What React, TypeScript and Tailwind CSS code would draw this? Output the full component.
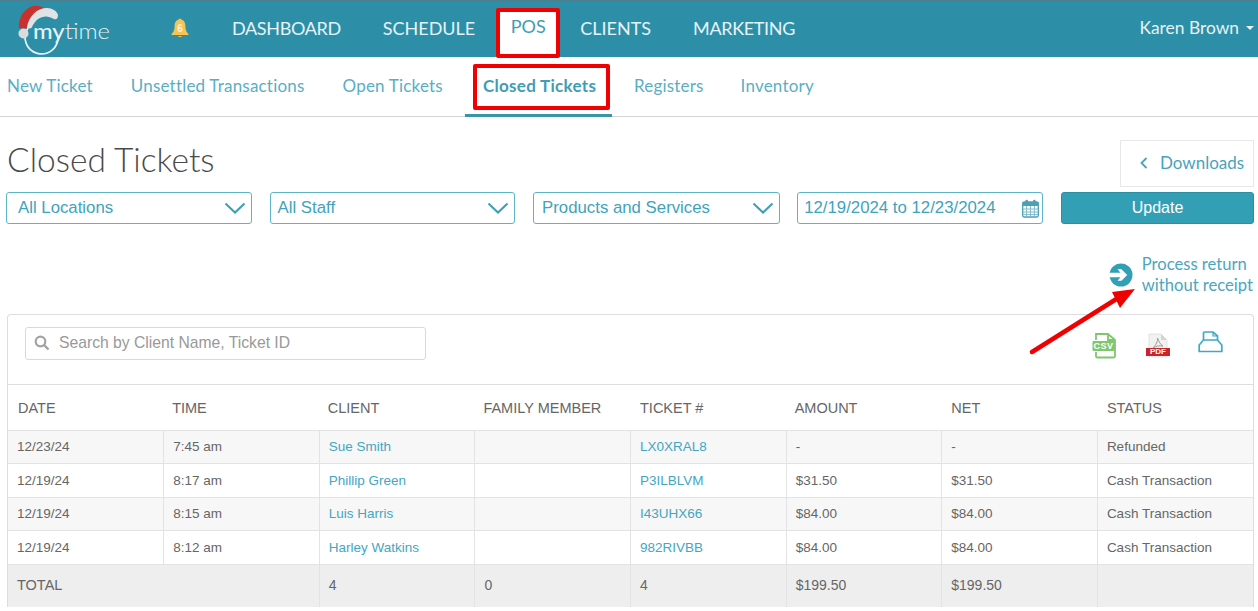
import React from "react";

const lato = "font-['Lato',sans-serif]";

function Logo() {
  return (
    <svg width="120" height="56" viewBox="0 0 120 56" className="block">
      <path d="M28 27 A 16.5 16.5 0 1 0 58 35" fill="none" stroke="#eaf4f7" strokeWidth="1.7" />
      <path d="M19 27 C18 18 23 8 33 5 C38 4 44 6 47 9 C39 10 32 14 29 20 L26 28 Z" fill="#c9312d" />
      <path d="M27 26 C29 15 37 7 47 7 C52 7 57 10 58 14 C58 18 56 19 54 18 C46 13 37 15 32 26 C31 28 27 28 27 26 Z" fill="#dfe3e6" />
      <circle cx="23.5" cy="32.5" r="5" fill="#d9dcde" />
      <text x="33" y="38" fontFamily="Lato, sans-serif" fontSize="21" fill="#e6f3f6" textLength="77" lengthAdjust="spacingAndGlyphs">
        <tspan fontWeight="500">my</tspan>
        <tspan fontWeight="300">time</tspan>
      </text>
    </svg>
  );
}

function Bell() {
  return (
    <div className="relative w-[18px] h-[20px]">
      <svg width="18" height="20" viewBox="0 0 18 20" className="block">
        <circle cx="9" cy="2" r="1.6" fill="#f2bd4d" />
        <path d="M9 1.5 C5 1.5 3.6 4.5 3.6 8 C3.6 12 2.6 14 0.6 16 L0.6 17 L17.4 17 L17.4 16 C15.4 14 14.4 12 14.4 8 C14.4 4.5 13 1.5 9 1.5 Z" fill="#f6c453" />
        <path d="M7 18 L11 18 C11 19.5 7 19.5 7 18 Z" fill="#f2bd4d" />
      </svg>
      <span className="absolute inset-x-0 top-[5px] text-center text-[10px] leading-[11px] font-bold text-[#fdf3d8] font-['Liberation_Sans',sans-serif]">6</span>
    </div>
  );
}

function Chevron() {
  return (
    <svg width="22" height="12" viewBox="0 0 22 12" className="block shrink-0">
      <path d="M1.5 1.5 L11 10.5 L20.5 1.5" fill="none" stroke="#3b9fb7" strokeWidth="2" />
    </svg>
  );
}

function Select({ label, className }: { label: string; className: string }) {
  return (
    <div className={`h-8 border border-[#5db4c9] rounded-[3px] flex items-center justify-between pr-[5px] font-['Liberation_Sans',sans-serif] text-[16.8px] text-[#3fa3bb] ${className}`}>
      <span>{label}</span>
      <Chevron />
    </div>
  );
}

function Calendar() {
  return (
    <svg width="17" height="19" viewBox="0 0 17 19" className="block shrink-0">
      <rect x="0.7" y="3" width="15.6" height="15" rx="1.5" fill="none" stroke="#4d9fb3" strokeWidth="1.3" />
      <rect x="0.7" y="3" width="15.6" height="4" fill="#4d9fb3" />
      <rect x="3.4" y="0.8" width="2.6" height="4.4" rx="1.2" fill="#4d9fb3" />
      <rect x="11" y="0.8" width="2.6" height="4.4" rx="1.2" fill="#4d9fb3" />
      <path d="M1 10 H16 M1 13 H16 M1 15.6 H16 M4.6 7 V18 M8.5 7 V18 M12.4 7 V18" stroke="#7fbccb" strokeWidth="1" />
    </svg>
  );
}

function ReturnIcon() {
  return (
    <svg width="24" height="24" viewBox="0 0 24 24" className="block shrink-0">
      <circle cx="12" cy="12" r="11.5" fill="#339fb5" />
      <path d="M0 9.8 H11.5 L8.5 6.3 H12.5 L18.2 12 L12.5 17.7 H8.5 L11.5 14.2 H0 Z" fill="#fff" />
    </svg>
  );
}

function CsvIcon() {
  return (
    <div className="relative w-[26px] h-[27px]">
      <svg width="26" height="27" viewBox="0 0 26 27" className="block">
        <path d="M4 8 V2 H16 L23 8 V24 Q23 25.5 21.5 25.5 H5.5 Q4 25.5 4 24 V20" fill="none" stroke="#7fc66f" strokeWidth="1.8" />
        <path d="M16 2 V8 H23" fill="none" stroke="#7fc66f" strokeWidth="1.8" />
        <rect x="0.5" y="9" width="22" height="10" rx="1" fill="#7fc66f" />
      </svg>
      <span className="absolute left-[1px] top-[9px] w-[21px] text-center text-[9px] leading-[10px] font-bold tracking-[0.5px] text-white font-['Liberation_Sans',sans-serif]">CSV</span>
    </div>
  );
}

function PdfIcon() {
  return (
    <div className="relative w-[26px] h-[26px]">
      <svg width="26" height="26" viewBox="0 0 26 26" className="block">
        <path d="M4 1 H16 L22 7 V24 H4 Z" fill="#f1f1f1" stroke="#e2e2e2" strokeWidth="1" />
        <path d="M16 1 V7 H22 Z" fill="#d4d4d4" />
        <path d="M8 15 C11 12 13 8 12.5 5 C14 9 15 11 18 13 C14 12.5 11 13 8 15 Z" fill="none" stroke="#9a9a9a" strokeWidth="1" />
        <rect x="1" y="15" width="24" height="8" fill="#c9242b" />
      </svg>
      <span className="absolute inset-x-0 top-[15px] text-center text-[8px] leading-[8px] font-bold text-white font-['Liberation_Sans',sans-serif]">PDF</span>
    </div>
  );
}

function PrinterIcon() {
  return (
    <svg width="25" height="22" viewBox="0 0 25 22" className="block">
      <path d="M5.5 9 V2 Q5.5 1 6.5 1 H15 L19.5 5 V9" fill="none" stroke="#3fa9c2" strokeWidth="1.7" />
      <path d="M15 1 V5 H19.5" fill="none" stroke="#3fa9c2" strokeWidth="1.2" />
      <path d="M5.5 9 H19.5 L23.8 14 V20.5 H1.2 V14 Z" fill="none" stroke="#3fa9c2" strokeWidth="1.7" />
    </svg>
  );
}

const rows = [
  ["12/23/24", "7:45 am", "Sue Smith", "LX0XRAL8", "-", "-", "Refunded", "h-[33px]"],
  ["12/19/24", "8:17 am", "Phillip Green", "P3ILBLVM", "$31.50", "$31.50", "Cash Transaction", "h-[34px]"],
  ["12/19/24", "8:15 am", "Luis Harris", "I43UHX66", "$84.00", "$84.00", "Cash Transaction", "h-[33px]"],
  ["12/19/24", "8:12 am", "Harley Watkins", "982RIVBB", "$84.00", "$84.00", "Cash Transaction", "h-[34px]"],
];

const heads = ["DATE", "TIME", "CLIENT", "FAMILY MEMBER", "TICKET #", "AMOUNT", "NET", "STATUS"];
const thPad = ["pl-[10px]", "pl-[8.5px]", "pl-[8.5px]", "pl-[8.5px]", "pl-[9.5px]", "pl-[8.5px]", "pl-[9.5px]", "pl-[9.5px]"];
const td = "border border-[#e3e3e3] pl-[9px] pr-0 align-middle";
const link = "text-[#45a6bf]";

export default function App() {
  return (
    <div className={`relative w-[1258px] h-[611px] overflow-hidden bg-white ${lato}`}>
      <header className="h-[57px] bg-[#2d8fa7] border-t border-[#4d7f8c] flex items-center text-white">
        <div className="self-stretch w-[171px]">
          <Logo />
        </div>
        <div className="w-[61px] mt-[-2px]">
          <Bell />
        </div>
        <nav className="flex items-center text-[18px] text-[#e6f3f6] self-stretch pb-[2px]">
          <a className="tracking-[-0.35px]">DASHBOARD</a>
          <a className="ml-[42px]">SCHEDULE</a>
          <a className="ml-[23px] self-end h-[48px] w-[60px] mb-[-2px] bg-white text-[#3f9db5] flex justify-center pt-[4px]">POS</a>
          <a className="ml-[22px]">CLIENTS</a>
          <a className="ml-[42px] tracking-[-0.35px]">MARKETING</a>
        </nav>
        <div className="ml-auto mr-[4px] mb-[2px] flex items-center gap-[7px] text-[17.4px] text-[#e6f3f6]">
          <span>Karen Brown</span>
          <span className="w-0 h-0 border-x-[4.5px] border-x-transparent border-t-[4.5px] border-t-[#e6f3f6]" />
        </div>
      </header>

      <nav className="h-[60px] border-b border-[#d5d5d5] flex text-[17px] tracking-[0.2px] text-[#5aaec4]">
        <a className="ml-[7px] pt-[16px]">New Ticket</a>
        <a className="ml-[38px] pt-[16px]">Unsettled Transactions</a>
        <a className="ml-[38px] pt-[16px]">Open Tickets</a>
        <a className="ml-[22px] w-[147px] pl-[18px] pt-[16px] h-[60px] border-b-[3px] border-[#3a95ab] font-bold text-[#3f9db5] tracking-[0.3px]">Closed Tickets</a>
        <a className="ml-[22px] pt-[16px]">Registers</a>
        <a className="ml-[37px] pt-[16px]">Inventory</a>
      </nav>

      <main className="pl-[6px] pr-[4px]">
        <div className="flex justify-between h-[75px]">
          <h1 className="mt-[21px] h-[42px] pl-[1px] text-[33.5px] font-light leading-[42px] text-[#4a4a4a]">Closed Tickets</h1>
          <div className="mt-[23px] w-[134px] h-[47px] border border-[#e8e8e8] flex items-center pl-[19px] pb-[2px] gap-[12px] text-[17px] text-[#47a4bc]">
            <svg width="8" height="12" viewBox="0 0 8 12"><path d="M6.5 1 L1.5 6 L6.5 11" fill="none" stroke="#47a4bc" strokeWidth="1.8" /></svg>
            <span>Downloads</span>
          </div>
        </div>

        <div className="flex gap-[17.67px]">
          <Select label="All Locations" className="w-[246px] pl-[11px]" />
          <Select label="All Staff" className="w-[246px] pl-[7px]" />
          <Select label="Products and Services" className="w-[246.6px] pl-[8px]" />
          <div className="w-[246.4px] h-8 border border-[#5db4c9] rounded-[3px] flex items-center justify-between pl-[6px] pr-[3px] font-['Liberation_Sans',sans-serif] text-[16.8px] text-[#3fa3bb]">
            <span>12/19/2024 to 12/23/2024</span>
            <Calendar />
          </div>
          <button className="w-[193px] h-8 bg-[#339fb5] border border-[#2c8ea3] rounded-[3px] text-white font-['Liberation_Sans',sans-serif] text-base text-center">Update</button>
        </div>

        <div className="flex justify-end items-center gap-[9px] h-[42px] mt-[30px] mr-[1px] text-[16.6px] leading-[21px] text-[#4ba6be]">
          <ReturnIcon />
          <div>Process return<br />without receipt</div>
        </div>

        <section className="mt-[18px] ml-px border border-[#dddddd] border-b-0 rounded-t-[4px] font-['Liberation_Sans',sans-serif]">
          <div className="h-[69px] flex justify-between pt-[12px] pl-[17px]">
            <div className="relative">
              <svg width="16" height="16" viewBox="0 0 16 16" className="absolute left-[9px] top-[8px]">
                <circle cx="6.5" cy="6.5" r="4.8" fill="none" stroke="#a3a3a3" strokeWidth="2.2" />
                <path d="M10 10 L14.5 14.5" stroke="#a3a3a3" strokeWidth="2.4" />
              </svg>
              <input
                placeholder="Search by Client Name, Ticket ID"
                className="w-[401px] h-[33px] border border-[#d9d9d9] rounded-[3px] pl-[33px] pb-[2px] text-[15.7px] outline-none placeholder:text-[#999999]"
              />
            </div>
            <div className="flex items-start">
              <div className="mt-[5px] mr-[27px]"><CsvIcon /></div>
              <div className="mt-[6px] mr-[27px]"><PdfIcon /></div>
              <div className="mt-[4px] mr-[30px]"><PrinterIcon /></div>
            </div>
          </div>

          <table className="w-full table-fixed border-collapse text-[13.5px] text-[#666666]">
            <thead>
              <tr className="h-[46px] border-t border-[#dfdfdf]">
                {heads.map((h, i) => (
                  <th key={h} className={`text-left font-normal pr-0 pt-[2px] text-[14.5px] text-[#666666] ${thPad[i]}`}>{h}</th>
                ))}
              </tr>
            </thead>
            <tbody>
              {rows.map((r, i) => {
                const pad = i % 2 === 1 ? "pt-[1px]" : "pt-0";
                return (
                  <tr key={i} className={`${r[7]} ${i % 2 === 0 ? "bg-[#f7f7f7]" : "bg-white"}`}>
                    <td className={`${td} ${pad} border-l-0`}>{r[0]}</td>
                    <td className={`${td} ${pad}`}>{r[1]}</td>
                    <td className={`${td} ${pad} ${link}`}>{r[2]}</td>
                    <td className={`${td} ${pad}`}></td>
                    <td className={`${td} ${pad} ${link}`}>{r[3]}</td>
                    <td className={`${td} ${pad}`}>{r[4]}</td>
                    <td className={`${td} ${pad}`}>{r[5]}</td>
                    <td className={`${td} ${pad} border-r-0`}>{r[6]}</td>
                  </tr>
                );
              })}
              <tr className="h-[42px] bg-[#eeeeee] text-[14px]">
                <td colSpan={2} className={`${td} border-l-0 border-b-0 border-[#e0e0e0] text-[14.5px]`}>TOTAL</td>
                <td className={`${td} border-b-0 border-[#e0e0e0]`}>4</td>
                <td className={`${td} border-b-0 border-[#e0e0e0]`}>0</td>
                <td className={`${td} border-b-0 border-[#e0e0e0]`}>4</td>
                <td className={`${td} border-b-0 border-[#e0e0e0]`}>$199.50</td>
                <td className={`${td} border-b-0 border-[#e0e0e0]`}>$199.50</td>
                <td className={`${td} border-r-0 border-b-0 border-[#e0e0e0]`}></td>
              </tr>
            </tbody>
          </table>
        </section>
      </main>

      <div className="absolute left-[496px] top-[8px] w-[64px] h-[50px] border-[4px] border-[#f00000] rounded-[2px]" />
      <div className="absolute left-[473px] top-[64px] w-[137px] h-[46px] border-[4px] border-[#f00000] rounded-[2px]" />
      <svg className="absolute left-[1020px] top-[280px]" width="125" height="80" viewBox="0 0 125 80">
        <path d="M12 72 L98 18" stroke="#f00000" strokeWidth="4.5" strokeLinecap="round" />
        <path d="M115 9 L92 12 L100 28 Z" fill="#f00000" />
      </svg>
    </div>
  );
}
